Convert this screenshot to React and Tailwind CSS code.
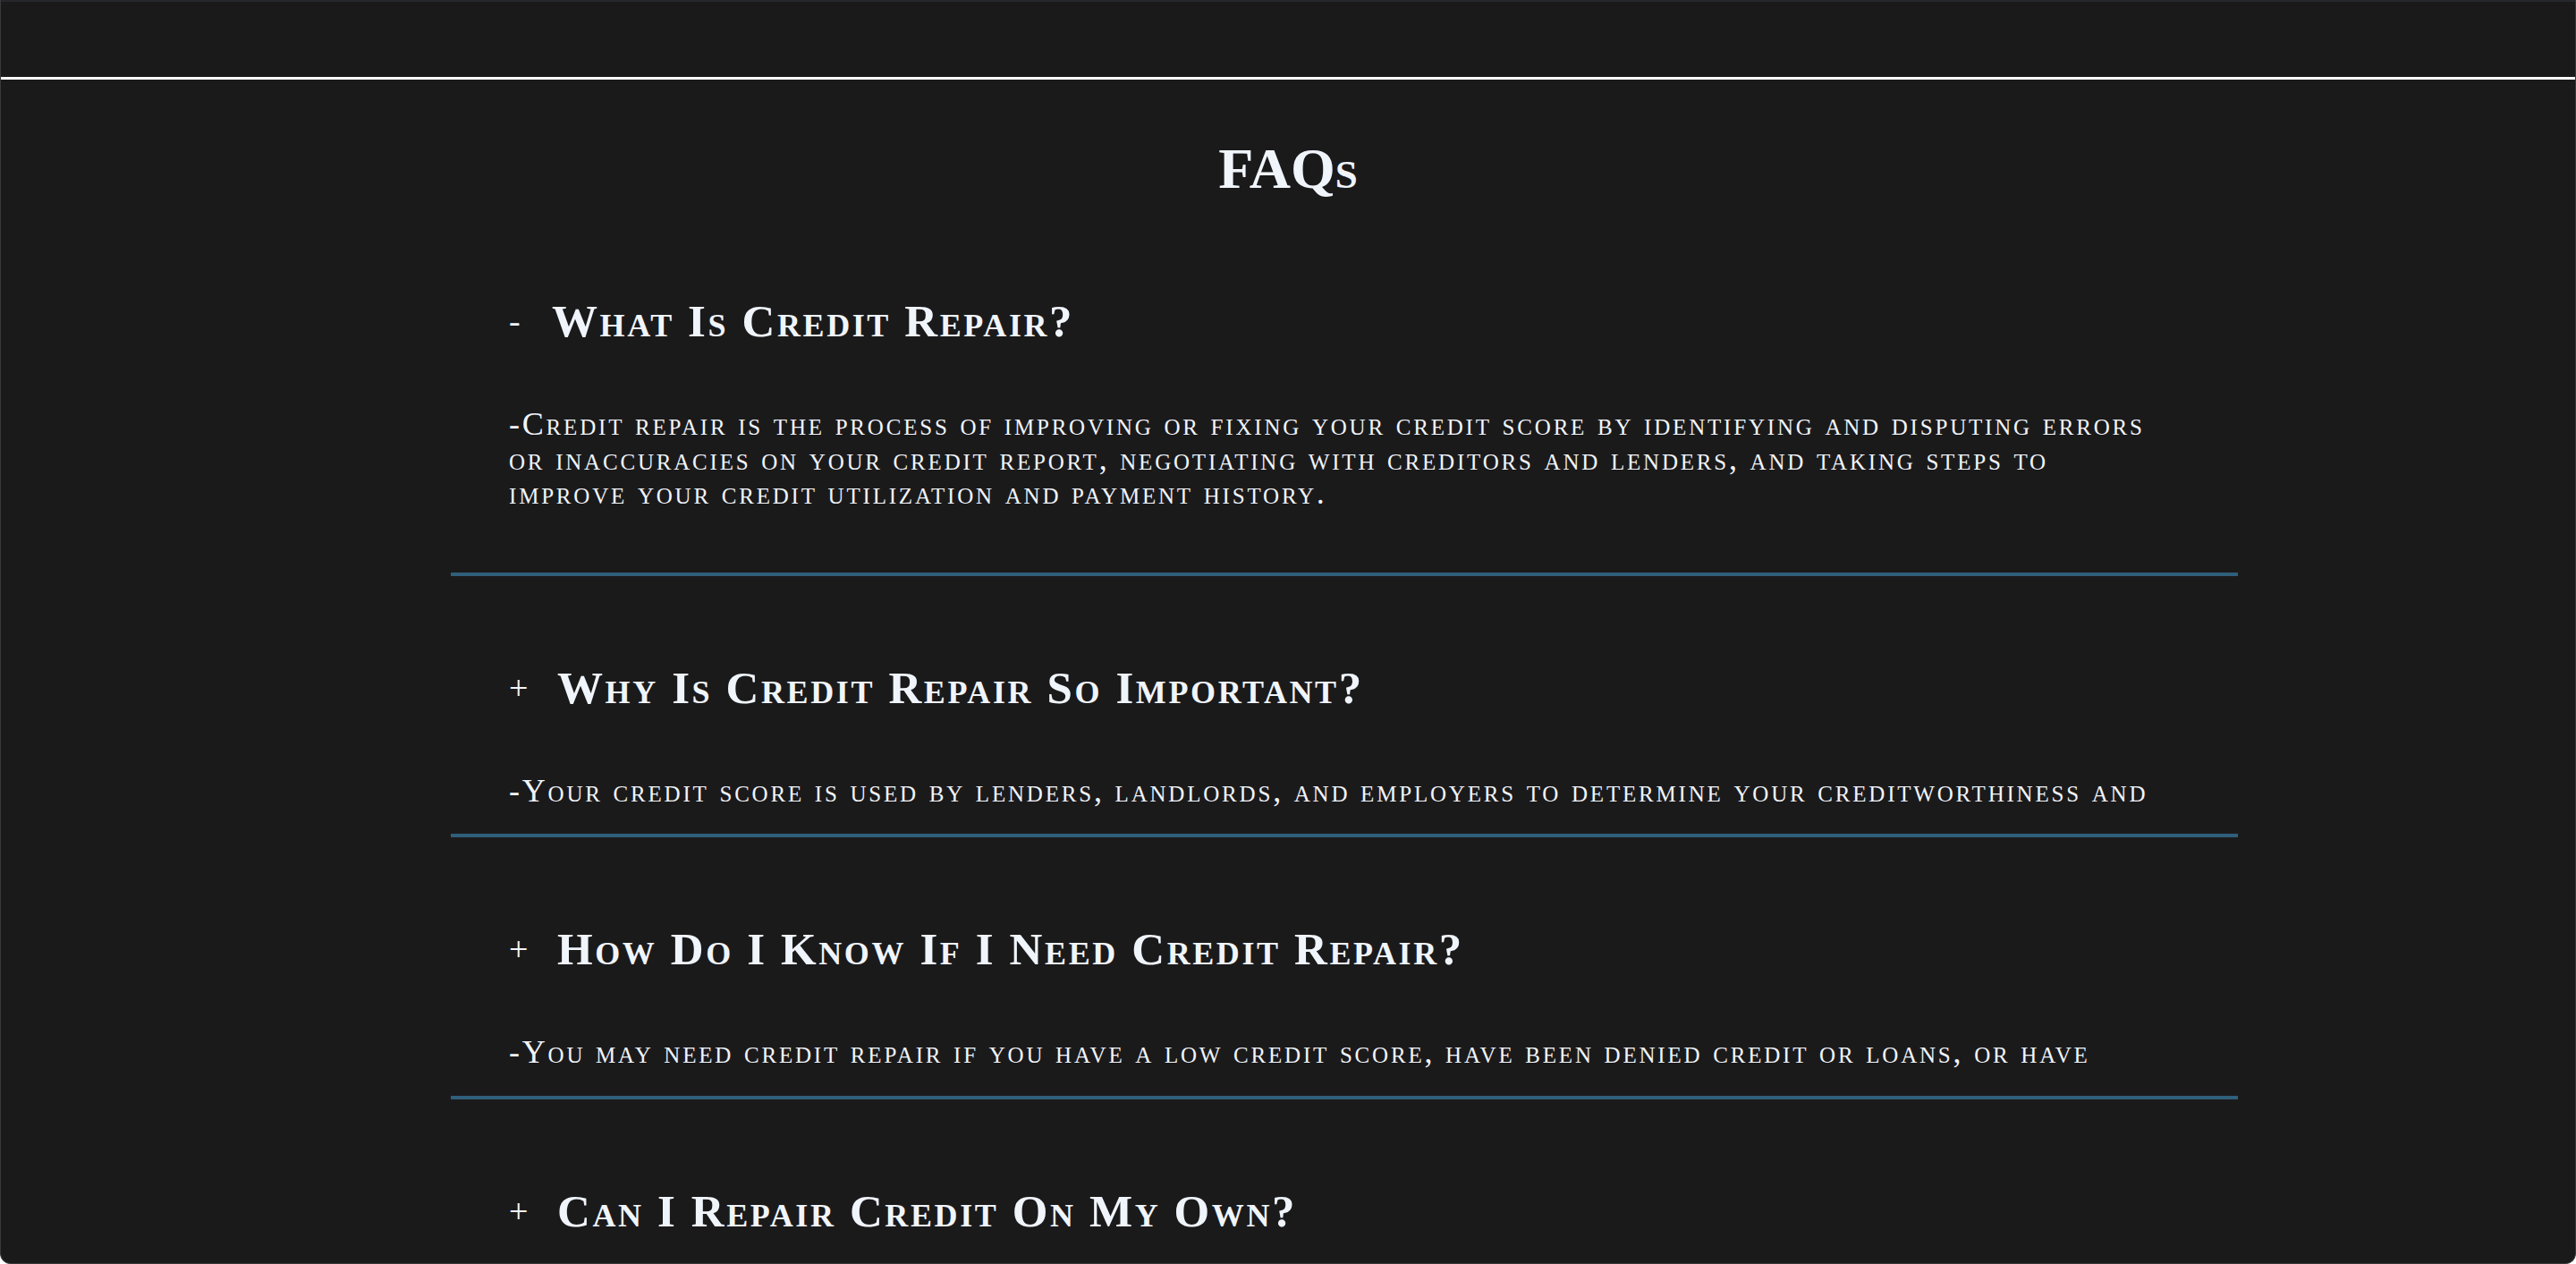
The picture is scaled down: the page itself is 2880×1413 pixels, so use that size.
import React, { useState } from 'react';

const faqs = [
  {
    question: 'What Is Credit Repair?',
    answer:
      '-Credit repair is the process of improving or fixing your credit score by identifying and disputing errors or inaccuracies on your credit report, negotiating with creditors and lenders, and taking steps to improve your credit utilization and payment history.',
  },
  {
    question: 'Why Is Credit Repair So Important?',
    answer:
      '-Your credit score is used by lenders, landlords, and employers to determine your creditworthiness and can affect the interest rates and terms you are offered on loans and credit cards.',
  },
  {
    question: 'How Do I Know If I Need Credit Repair?',
    answer:
      '-You may need credit repair if you have a low credit score, have been denied credit or loans, or have noticed errors or negative items on your credit report.',
  },
  {
    question: 'Can I Repair Credit On My Own?',
    answer:
      '-Yes, you can dispute errors with the credit bureaus yourself, but a professional service can save you time and help you navigate the process.',
  },
];

function FaqItem({ faq, open, onToggle }) {
  return (
    <div className="border-b-4 border-[#2f5f7a]">
      {/* Question */}
      <button
        type="button"
        onClick={onToggle}
        className="flex items-center pl-[65px] pt-[100px] text-left"
      >
        <span
          className={
            open
              ? 'w-[48px] shrink-0 text-[38px] font-normal leading-[51px]'
              : 'w-[54px] shrink-0 text-[38px] font-normal leading-[51px]'
          }
        >
          {open ? '-' : '+'}
        </span>
        <span className="text-[51px] font-bold leading-[51px] tracking-[2.6px]">
          {faq.question}
        </span>
      </button>

      {/* Réponse */}
      <div
        className={
          open
            ? 'pl-[65px] pr-[85px] pt-[70px] pb-[69px]'
            : 'pl-[65px] pr-[85px] pt-[70px] pb-[29px]'
        }
      >
        <p
          className={
            open
              ? 'text-[36px] leading-[38.5px] tracking-[2.8px]'
              : 'h-[38.5px] overflow-hidden text-[36px] leading-[38.5px] tracking-[2.8px]'
          }
        >
          {faq.answer}
        </p>
      </div>
    </div>
  );
}

export default function App() {
  const [openIndex, setOpenIndex] = useState(0);

  return (
    <div className="h-[1413px] w-full overflow-hidden rounded-b-[12px] border-x border-b border-[#3a3a3c] bg-[#1b1a1b] font-['Liberation_Serif',serif] text-[#f0f5fb] [font-variant:small-caps]">
      <div className="h-[2px] bg-[#26272b]" />
      <header className="h-[87px] border-b-[3px] border-white" />

      <section>
        <h1 className="pt-[68px] text-center text-[64px] font-bold leading-[64px]">FAQs</h1>

        <div className="mt-[13px] pl-[503px] pr-[377px]">
          {faqs.map((faq, i) => (
            <FaqItem
              key={faq.question}
              faq={faq}
              open={openIndex === i}
              onToggle={() => setOpenIndex(openIndex === i ? -1 : i)}
            />
          ))}
        </div>
      </section>
    </div>
  );
}
